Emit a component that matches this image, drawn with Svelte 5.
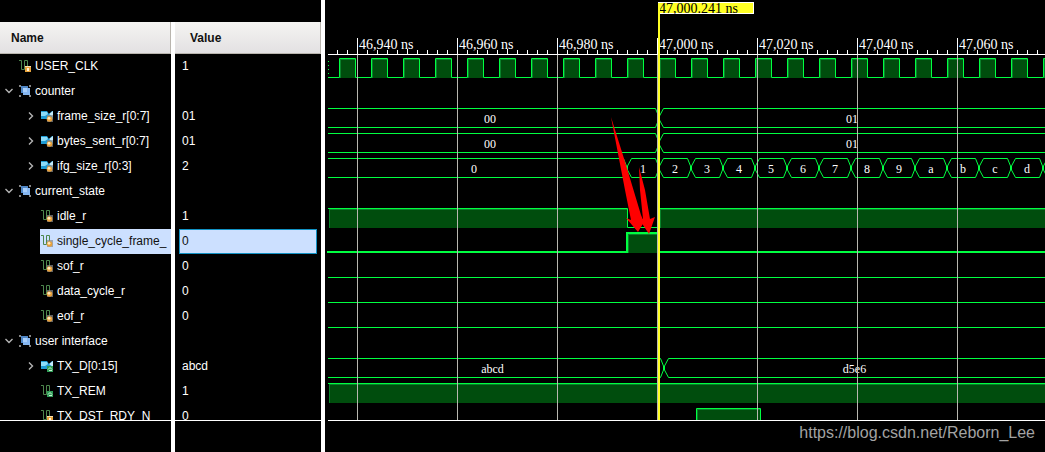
<script>
	const NS = 5; // pixels per ns
	const ORIGIN = 332; // x of 47,000 ns
	const CURSOR = 334;
	const ROW = 25;
	const END = 4000;

	const HI = 4.5;
	const LO = 23.5;

	// ifg_size_r counts up once per clock from the cursor on
	const ifg = [{ x: -4, text: '0' }];
	for (let i = 0; i < 110; i++) {
		ifg.push({ x: 302 + 32 * i, text: ((i + 1) % 16).toString(16) });
	}

	const clock = [];
	for (let x = 14; x < END; x += 32) clock.push([x, x + 16]);

	const byteBus = [{ x: -4, text: '00' }, { x: 334, text: '01' }];

	const signals = [
		{ name: 'USER_CLK', value: '1', depth: 0, icon: 'lock', pulses: clock, clock: true },
		{ name: 'counter', value: '', depth: 0, icon: 'group' },
		{ name: 'frame_size_r[0:7]', value: '01', depth: 1, icon: 'bus', badge: 'reg', parent: 'counter', bus: byteBus },
		{ name: 'bytes_sent_r[0:7]', value: '01', depth: 1, icon: 'bus', badge: 'reg', parent: 'counter', bus: byteBus },
		{ name: 'ifg_size_r[0:3]', value: '2', depth: 1, icon: 'bus', badge: 'reg', parent: 'counter', bus: ifg },
		{ name: 'current_state', value: '', depth: 0, icon: 'group' },
		{ name: 'idle_r', value: '1', depth: 1, icon: 'reg', parent: 'current_state', pulses: [[3, 302], [334, END]] },
		{ name: 'single_cycle_frame_', value: '0', depth: 1, icon: 'reg', parent: 'current_state', pulses: [[302, 334]] },
		{ name: 'sof_r', value: '0', depth: 1, icon: 'reg', parent: 'current_state', pulses: [] },
		{ name: 'data_cycle_r', value: '0', depth: 1, icon: 'reg', parent: 'current_state', pulses: [] },
		{ name: 'eof_r', value: '0', depth: 1, icon: 'reg', parent: 'current_state', pulses: [] },
		{ name: 'user interface', value: '', depth: 0, icon: 'group' },
		{ name: 'TX_D[0:15]', value: 'abcd', depth: 1, icon: 'bus', badge: 'port', parent: 'user interface', bus: [{ x: -4, text: 'abcd' }, { x: 339, text: 'd5e6' }] },
		{ name: 'TX_REM', value: '1', depth: 1, icon: 'port', parent: 'user interface', pulses: [[3, END]] },
		{ name: 'TX_DST_RDY_N', value: '0', depth: 1, icon: 'lock', parent: 'user interface', pulses: [[371, 435]] }
	];

	const allTicks = [];
	for (let i = -40; i < 400; i++) {
		const x = ORIGIN + i * 10;
		if (x > 3) allTicks.push({ x, i });
	}

	let width = $state(720);
	let selected = $state('single_cycle_frame_');
	let open = $state({ counter: true, current_state: true, 'user interface': true });

	let rows = $derived(signals.filter((s) => !s.parent || open[s.parent]));
	let ticks = $derived(allTicks.filter((t) => t.x < width));
	let majors = $derived(ticks.filter((t) => t.i % 10 === 0));

	function toggle(row) {
		if (row.icon === 'group') open[row.name] = !open[row.name];
	}

	function tickLabel(i) {
		return (47000 + (i * 10) / NS).toLocaleString('en-US') + ' ns';
	}

	// thick traces are two pixels wide, so they sit on whole pixels
	function levelPath(pulses, thick) {
		const off = thick ? 0 : 0.5;
		const hi = 4 + off;
		const lo = 23 + off;
		let d = `M${thick ? 2 : 3} ${lo}`;
		for (const [a, b] of pulses) {
			d += a === 3 ? `M3 ${hi}` : `H${a + off}V${hi}`;
			d += b === END ? `H${END}` : `H${b + off}V${lo}`;
		}
		return pulses.length && pulses[pulses.length - 1][1] === END ? d : d + `H${END}`;
	}

	function busPath(segments) {
		let top = `M3 ${HI}`;
		let bottom = `M3 ${LO}`;
		for (const { x } of segments.slice(1)) {
			top += `H${x - 3.5}L${x - 0.5} 12V16L${x - 3.5} ${LO}M${x + 4.5} ${HI}`;
			bottom += `H${x - 3.5}M${x + 4.5} ${HI}L${x + 0.5} 12V16L${x + 4.5} ${LO}`;
		}
		return top + `H${END}` + bottom + `H${END}`;
	}

	// a value is centred in the visible part of its segment
	function busLabels(segments, w) {
		return segments
			.map((s, i) => ({ text: s.text, x: (s.x + (segments[i + 1]?.x ?? w)) / 2 }))
			.filter((l) => l.x < w - 8);
	}
</script>

{#snippet badge(kind)}
	{#if kind === 'reg'}
		<rect x="6" y="5" width="6" height="7" fill="#8a8a8a" opacity="0.7" />
		<circle cx="8.5" cy="9" r="2.8" fill="#e9a13a" />
		<circle cx="8" cy="8.3" r="1.4" fill="#ffe9bd" />
	{:else if kind === 'port'}
		<rect x="6" y="6" width="6" height="6" fill="#2f9c57" />
		<path d="M7 9.5L9 7.5L11 9.5M8 10.5H11" stroke="#c9f2d4" fill="none" />
	{:else}
		<rect x="6" y="6" width="6" height="6" fill="#e8a43c" />
		<rect x="6" y="6" width="6" height="1" fill="#f8dfae" />
		<rect x="8" y="8" width="2" height="3" fill="#fff3d8" />
	{/if}
{/snippet}

{#snippet icon(row)}
	<svg class="icon" viewBox="0 0 12 12" aria-hidden="true">
		{#if row.icon === 'group'}
			<path d="M0 1H2M1 0V2M10 1H12M11 0V2M0 11H2M1 10V12M10 11H12M11 10V12" stroke="#858585" stroke-width="2" fill="none" />
			<rect x="2" y="1" width="7" height="7" fill="#4f86c6" />
			<rect x="4" y="3" width="7" height="7" fill="#86b6f0" />
			<rect x="4" y="3" width="4" height="4" fill="#a9cffa" />
		{:else if row.icon === 'bus'}
			<path d="M0 1H6L8 4L11 1H12V9L8 6L6 9H0Z" fill="#1e9bd4" />
			<path d="M0 2H6L7 4L4 6H0Z" fill="#8bdcfa" />
			<path d="M8 4L12 1V7Z" fill="#c5ecfb" />
			{@render badge(row.badge)}
		{:else}
			<path d="M0 0.5H2.5V9.5H5.5V0.5H8.5V6" stroke="#4d864d" fill="none" />
			{@render badge(row.icon)}
		{/if}
	</svg>
{/snippet}

<div class="viewer">
	<div class="signals">
		<div class="table-wrap">
			<table>
				<thead>
					<tr>
						<th class="name-col">Name</th>
						<th>Value</th>
					</tr>
				</thead>
				<tbody>
					{#each rows as row}
						<tr class:selected={row.name === selected}>
							<td class="name-col">
								<div class="cell" class:child={row.depth === 1}>
									{#if row.icon === 'group' || row.icon === 'bus'}
										<button class="expander" aria-label={'Expand ' + row.name} onclick={() => toggle(row)}>
											<svg viewBox="0 0 8 8" aria-hidden="true">
												<path d={row.icon === 'group' && open[row.name] ? 'M0.5 2L4 5.5L7.5 2' : 'M2 0.5L5.5 4L2 7.5'} />
											</svg>
										</button>
									{:else}
										<span class="expander"></span>
									{/if}
									<button class="label" onclick={() => (selected = row.name)}>
										{@render icon(row)}
										<span>{row.name}</span>
									</button>
								</div>
							</td>
							<td><div class="value">{row.value}</div></td>
						</tr>
					{/each}
				</tbody>
			</table>
		</div>
		<div class="scroll-row"><div class="name-col"></div></div>
	</div>

	<div class="waves">
		<svg class="plot" bind:clientWidth={width} role="img" aria-label="Waveforms">
			<!-- time ruler -->
			<g class="ruler">
				<rect x="3" y="54" width={END} height="1" />
				{#each ticks as t}
					<rect x={t.x} y={t.i % 10 === 0 ? 38 : t.i % 5 === 0 ? 49 : 50} width="1" height={t.i % 10 === 0 ? 16 : 5} />
				{/each}
				{#each majors as t}
					<text class="time" x={t.x + 2} y="49">{tickLabel(t.i)}</text>
				{/each}
			</g>

			{#each rows as row, n}
				<g transform="translate(0 {54 + n * ROW})" class:thick={row.name === selected}>
					{#if row.bus}
						<path class="trace" d={busPath(row.bus)} />
						{#each busLabels(row.bus, width) as l}
							<text class="bus-text" x={l.x} y="19">{l.text}</text>
						{/each}
					{:else if row.pulses}
						{#each row.pulses as [a, b]}
							<rect class="edge" x={a + 1} y="5" width={b - a - 1} height="19" />
							<rect class="fill" x={a + 2} y="6" width={b - a - 2} height="18" />
						{/each}
						<path class="trace" d={levelPath(row.pulses, row.name === selected)} />
						{#if row.clock}
							<path class="trace" d="M3.5 7V23" stroke-dasharray="1 3" />
						{/if}
					{/if}
				</g>
			{/each}

			{#each majors as t}
				<rect class="grid" x={t.x} y="55" width="1" height="100%" />
			{/each}

			<!-- cursor -->
			<rect x={CURSOR - 1} y="2" width="96" height="12" fill="#fff" />
			<rect x={CURSOR - 1} y="3" width="95" height="10" fill="#ffff24" />
			<text class="time" x={CURSOR} y="13">47,000.241 ns</text>
			<rect x={CURSOR - 1} y="3" width="2" height="100%" fill="#ffff24" />

			<!-- annotations -->
			<g fill="#f00">
				<path d="M286 117L301 165L316 215L319 222L313 232L301 218L306 220L300 190Z" />
				<path d="M314 167L320 190L325 219L330 217L324 234L314 219L318 219L315 190Z" />
			</g>
		</svg>
		<div class="footer">https://blog.csdn.net/Reborn_Lee</div>
	</div>
</div>

<style>
	:global(body) {
		background: #000;
	}
	.viewer {
		display: grid;
		grid-template-columns: 325px 1fr;
		height: 100vh;
		overflow: hidden;
		background: #000;
		color: #fff;
		font-family: 'Liberation Sans', Arial, sans-serif;
		font-size: 12px;
	}
	.signals,
	.waves {
		display: flex;
		flex-direction: column;
		min-width: 0;
		min-height: 0;
	}
	.signals {
		border-right: 4px solid #fff;
	}
	.table-wrap {
		flex: 1;
		min-height: 0;
		overflow: hidden;
		padding-top: 22px;
	}
	table {
		width: 100%;
		table-layout: fixed;
		border-collapse: separate;
		border-spacing: 0;
	}
	.name-col {
		box-sizing: border-box;
		width: 175px;
		border-right: 4px solid #fff;
	}
	th {
		height: 32px;
		box-sizing: border-box;
		padding: 0 15px;
		text-align: left;
		color: #111;
		background: linear-gradient(#f5f4f2, #e2e0e2);
		box-shadow: inset -1px -1px #b9b5ae;
	}
	th.name-col {
		padding: 0 11px;
	}
	td {
		height: 25px;
		padding: 0;
	}
	.cell {
		display: flex;
		height: 25px;
	}
	.child {
		padding-left: 22px;
	}
	button {
		padding: 0;
		border: 0;
		background: none;
		color: inherit;
		font: inherit;
		text-align: left;
	}
	.expander {
		flex: none;
		display: flex;
		align-items: center;
		width: 18px;
		padding: 0 0 1px 5px;
		box-sizing: border-box;
	}
	.expander svg {
		width: 8px;
		height: 8px;
	}
	.expander path {
		fill: none;
		stroke: #b4b4b4;
		stroke-width: 1.4;
	}
	.label {
		flex: 1;
		min-width: 0;
		display: flex;
		align-items: center;
		gap: 4px;
		padding: 0 0 1px 1px;
		overflow: hidden;
		white-space: nowrap;
	}
	.icon {
		flex: none;
		width: 12px;
		height: 12px;
	}
	.value {
		box-sizing: border-box;
		height: 25px;
		margin: 0 4px;
		padding: 0 2px;
		border: 1px solid transparent;
		line-height: 23px;
	}
	.selected .label,
	.selected .value {
		background: #cce0ff;
		color: #111;
	}
	.selected .value {
		border-color: #1292c4;
	}
	.scroll-row {
		display: flex;
		height: 31px;
		border-top: 1px solid #fff;
	}
	.plot {
		flex: 1;
		display: block;
		width: 100%;
		min-height: 0;
		overflow: hidden;
	}
	.ruler {
		fill: #fff;
	}
	.time {
		font: 14px 'Liberation Serif', serif;
	}
	.bus-text {
		font: 12px 'Liberation Serif', serif;
		fill: #fff;
		text-anchor: middle;
	}
	.trace {
		fill: none;
		stroke: #00ff41;
	}
	.thick .trace {
		stroke-width: 2px;
	}
	.edge {
		fill: #08822a;
	}
	.fill {
		fill: #004d0d;
	}
	.grid {
		fill: #b8b8b0;
	}
	.footer {
		height: 31px;
		margin-left: 3px;
		padding-right: 10px;
		border-top: 1px solid #fff;
		color: #a3a3a3;
		font-size: 16px;
		line-height: 24px;
		text-align: right;
	}
</style>
